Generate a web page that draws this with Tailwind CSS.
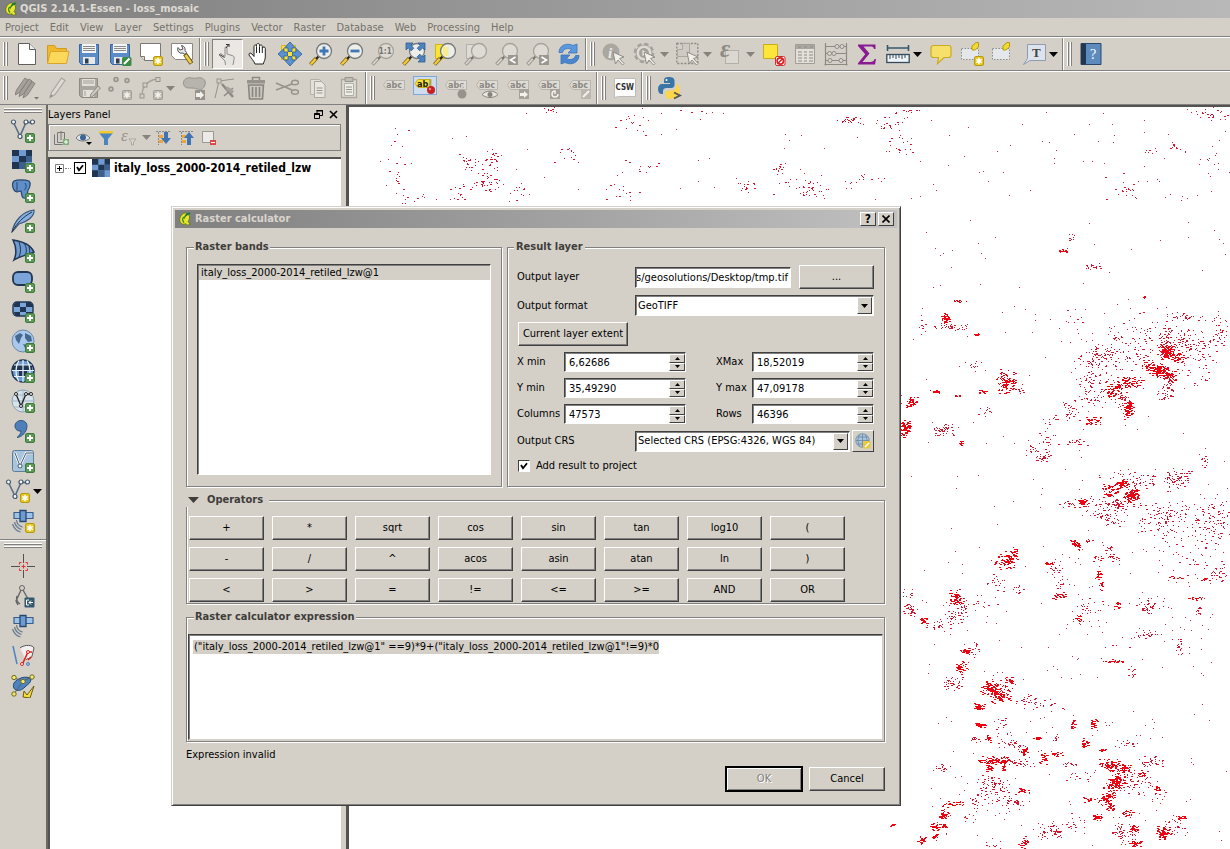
<!DOCTYPE html>
<html lang="en">
<head>
<meta charset="utf-8">
<title>QGIS 2.14.1-Essen - loss_mosaic</title>
<script src="https://cdn.jsdelivr.net/npm/@tailwindcss/browser@4"></script>
</head>
<body class="flex h-screen flex-col overflow-hidden bg-[#d4d0c8] font-['DejaVu_Sans_Condensed','DejaVu_Sans',sans-serif] text-[11px] leading-[14px] text-black">

<!-- Icon library -->
<svg class="hidden" aria-hidden="true">
  <defs>
    <symbol id="plus" viewBox="0 0 24 24"><rect x="14.500" y="14.500" width="9" height="9" rx="1.500" fill="#5b9a55" stroke="#3f7a3c"/><path d="M19 16v6M16 19h6" stroke="#fff" stroke-width="2"/></symbol>
    <symbol id="star" viewBox="0 0 24 24"><rect x="14.500" y="14.500" width="9" height="9" rx="1.500" fill="#e8c51c" stroke="#b59a12"/><path d="M19 15.800v6.400M16.200 17.400l5.600 3.200M21.800 17.400l-5.600 3.200" stroke="#fff" stroke-width="1.600"/></symbol>
    <symbol id="gstar" viewBox="0 0 24 24"><rect x="14.500" y="14.500" width="9" height="9" rx="1" fill="#bab7b0" stroke="#a19e97"/><path d="M19 15.800v6.400M16.200 17.400l5.600 3.200M21.800 17.400l-5.600 3.200" stroke="#f3f1ec" stroke-width="1.600"/></symbol>
    <symbol id="down" viewBox="0 0 9 5"><path d="M0 0h9L4.500 5z" fill="currentColor"/></symbol>
    <symbol id="tick" viewBox="0 0 8 8"><path d="M1 3l2 3.200 4-5" fill="none" stroke="#000" stroke-width="1.800"/></symbol>
    <symbol id="logo" viewBox="0 0 16 16"><path d="M9 1C5 1 2 5 2 9c0 3 2 5 4.500 5 .8 0 1.600-.3 2.300-.7L11 15l3-1-2.500-3C13 9 13.500 6 13 4z" fill="#e9e62f" stroke="#4e6b12" stroke-width=".8"/><path d="M13.500.5C9 1 6.500 4 7 8.500 8.500 4.500 11 3.500 14 2z" fill="#197a27"/><path d="M6.500 5.500C5 7.500 5 10.500 7 12" stroke="#2f7a1c" stroke-width="1.600" fill="none"/></symbol>

    <symbol id="new" viewBox="0 0 24 24"><path d="M3.500 1.500h11l6 6v15h-17z" fill="#fff" stroke="#5f5f5f"/><path d="M14.500 1.500v6h6" fill="#eee" stroke="#5f5f5f"/></symbol>
    <symbol id="open" viewBox="0 0 24 24"><path d="M1.500 20.500v-17h7l2 3h10v4" fill="#f0b92c" stroke="#d39a1f"/><path d="M1.500 21.500l3-12h18.500l-2.500 12z" fill="#fbd75b" stroke="#dba52c"/></symbol>
    <symbol id="save" viewBox="0 0 24 24"><path d="M2.500 2.500h19v20h-17l-2-2z" fill="#5b8cc8" stroke="#34659f"/><path d="M5 2h14v9H5z" fill="#f4f4f4"/><path d="M6 4.500h12M6 6.500h12M6 8.500h12" stroke="#8a8a8a"/><path d="M6 15h12v7H6z" fill="#e8e8e8"/><path d="M8 16.500h3.500v5H8z" fill="#2d3e54"/></symbol>
    <symbol id="saveas" viewBox="0 0 24 24"><use href="#save"/><rect x="14" y="15" width="9.500" height="9" rx="1.500" fill="#3d8a46"/><path d="M16 22l5.500-5.500" stroke="#fff" stroke-width="2"/></symbol>
    <symbol id="composer" viewBox="0 0 24 24"><path d="M1.500 1.500h20v17h-16l-4-4z" fill="#fff" stroke="#777"/><path d="M1.500 14.500h4v4" fill="#ddd" stroke="#777"/><use href="#star"/></symbol>
    <symbol id="manager" viewBox="0 0 24 24"><path d="M1.500 1.500h21v16h-17l-4-4z" fill="#fff" stroke="#888"/><path d="M15 12l6.500 9.500" stroke="#6b5a18" stroke-width="4.500" fill="none"/><path d="M15.500 13l5.500 8" stroke="#efd04a" stroke-width="2.500" fill="none"/><path d="M8 5.500a4 4 0 005 5.500l2 1.500 1.500-2-1.500-2a4 4 0 00-3.500-5L13 7l-3 1z" fill="#e5e7ec" stroke="#555"/></symbol>
    <symbol id="touch" viewBox="0 0 24 24"><path d="M9.500 23l-.5-4-6-6 1.500-1.500 4.500 3V6c0-1.500 2-1.500 2 0v6l5 1.500c2 .5 2.500 1.500 2 4l-1 5.500" fill="#e7e5e0" stroke="#8d8d8d"/><path d="M10 6l3-4M3.500 12.500l5 3" stroke="#333"/><path d="M13 2.500h-3M13 2v3" stroke="#333"/></symbol>
    <symbol id="hand" viewBox="0 0 24 24"><path d="M8 22c-1-3-4-6-6-9-.5-2 1.500-2.500 3-1l2 2.500V4.500c0-2 2.500-2 2.500 0V3c0-2 3-2 3 0v1.500c0-2 2.800-2 2.800 0V6c.5-1.500 3-1.500 3 .5V15c0 3-1.500 4.500-2 7z" fill="#fff" stroke="#222"/><path d="M9.500 5v6M12.500 5v6M15.300 6v5" stroke="#222"/></symbol>
    <symbol id="pan" viewBox="0 0 24 24"><path d="M3.500 3.500h14v14h-14z" fill="#f9e33a" stroke="#d2b71e"/><path d="M12 0l5.500 6H14v3.500h-4V6H6.500zM12 24l-5.500-6H10v-3.500h4V18h3.500zM0 12l6-5.500V10h3.500v4H6v3.500zM24 12l-6 5.500V14h-3.500v-4H18V6.500z" fill="#5c93cf" stroke="#2d5c93" stroke-width=".8"/></symbol>
    <symbol id="glass" viewBox="0 0 24 24"><path d="M1.500 22.500l6-6.500" stroke="#806414" stroke-width="4"/><path d="M1.800 22.200l5.700-6.200" stroke="#f2cc3c" stroke-width="2.400"/><path d="M7 17l2.500-2.500" stroke="#222" stroke-width="2.200"/><circle cx="15" cy="9" r="7.500" fill="#f1f3ef" fill-opacity=".85" stroke="#757a7c" stroke-width="1.300"/></symbol>
    <symbol id="gglass" viewBox="0 0 24 24"><path d="M1.500 22.500l6-6.500" stroke="#9a968e" stroke-width="3.600"/><path d="M2 22l5.500-6" stroke="#d9d6d0" stroke-width="1.800"/><path d="M7 17l2.500-2.500" stroke="#77746e" stroke-width="2"/><circle cx="15" cy="9" r="7.500" fill="#dedbd5" stroke="#a6a39c" stroke-width="1.300"/></symbol>
    <symbol id="zin" viewBox="0 0 24 24"><use href="#glass"/><path d="M15 4.500v9M10.500 9h9" stroke="#3d77b5" stroke-width="2.800"/></symbol>
    <symbol id="zout" viewBox="0 0 24 24"><use href="#glass"/><path d="M10.500 9h9" stroke="#3d77b5" stroke-width="2.800"/></symbol>
    <symbol id="zone" viewBox="0 0 24 24"><use href="#gglass"/><text x="7.800" y="12" font-size="8" font-weight="bold" fill="#77746e">1:1</text></symbol>
    <symbol id="zfull" viewBox="0 0 24 24"><use href="#glass"/><path d="M4 1h7L8.800 3.200l3 3-2.600 2.600-3-3L4 8zM23 1v7l-2.200-2.200-3 3-2.600-2.600 3-3L16 1zM23 20h-7l2.200-2.200-3-3 2.600-2.600 3 3L23 13z" fill="#4d84c0" stroke="#2c5c92" stroke-width=".8"/></symbol>
    <symbol id="zsel" viewBox="0 0 24 24"><path d="M2.500 2.500h13v14h-13z" fill="#fbe430" stroke="#cdb41c"/><use href="#glass"/><path d="M10 5h5v9h-5z" fill="#f7ec92"/></symbol>
    <symbol id="zlay" viewBox="0 0 24 24"><path d="M2.500 2.500h13v14h-13z" fill="#dedbd5" stroke="#b3b0a9"/><use href="#gglass"/></symbol>
    <symbol id="zprev" viewBox="0 0 24 24"><use href="#gglass"/><path d="M13 13h10v10H13z" fill="#9b9892"/><path d="M20.500 15l-5 3 5 3" stroke="#fff" stroke-width="1.600" fill="none"/></symbol>
    <symbol id="znext" viewBox="0 0 24 24"><use href="#gglass"/><path d="M13 13h10v10H13z" fill="#9b9892"/><path d="M15.500 15l5 3-5 3" stroke="#fff" stroke-width="1.600" fill="none"/></symbol>
    <symbol id="refresh" viewBox="0 0 24 24"><path d="M2 10.500C2 4 9 0 16 3.500L20 2v9h-9l3.500-3.500C11 5.500 6.500 6.500 5.500 10.500z" fill="#5c98dd" stroke="#3a74b8" stroke-width=".8"/><path d="M22 13.500C22 20 15 24 8 20.500L4 22v-9h9l-3.500 3.500c3.500 2 8 1 9-3z" fill="#4a86cf" stroke="#3a74b8" stroke-width=".8"/></symbol>
    <symbol id="cur" viewBox="0 0 24 24"><path d="M11 10l11 5-4.500 1.500 4.500 5-1.500 1.500-4.500-5-2.500 4z" fill="#f1efea" stroke="#8f8c86"/></symbol>
    <symbol id="info" viewBox="0 0 24 24"><circle cx="9" cy="10" r="8.500" fill="#aaa7a0"/><text x="6" y="15.500" font-size="15" font-weight="bold" font-style="italic" fill="#ebe9e4" font-family="Liberation Serif">i</text><use href="#cur"/></symbol>
    <symbol id="gear" viewBox="0 0 24 24"><circle cx="11" cy="11" r="8.800" fill="#d9d6d0" stroke="#a5a29b" stroke-width="3" stroke-dasharray="4.200 2.700"/><circle cx="11" cy="11" r="8" fill="#dedbd5" stroke="#a5a29b"/><circle cx="11" cy="11" r="5" fill="#a5a29b"/><path d="M9.500 8l4.500 3-4.500 3z" fill="#f1efea"/><use href="#cur"/></symbol>
    <symbol id="select" viewBox="0 0 24 24"><path d="M.8 1.500h21v20h-21z" fill="none" stroke="#8b8882" stroke-width="1.300" stroke-dasharray="2 1.500"/><path d="M6.500 1.500h7v13h-12v-7h5z" fill="#cecbc4" stroke="#aaa7a0"/><use href="#cur"/></symbol>
    <symbol id="eps" viewBox="0 0 24 24"><rect x="6.500" y="8.500" width="13" height="13" fill="#dbd8d1" stroke="#b3b0a9"/><text x="1" y="15" font-size="25" font-style="italic" font-weight="bold" fill="#8d8a84" font-family="Liberation Serif">ε</text></symbol>
    <symbol id="desel" viewBox="0 0 24 24"><path d="M1.500 2.500h14v14h-14z" fill="#fde53a" stroke="#c9ad1a"/><rect x="13.500" y="14.500" width="9.500" height="9" rx="1.500" fill="#fff" stroke="#c83232"/><circle cx="18.300" cy="19" r="3.200" fill="#fff" stroke="#d22" stroke-width="1.700"/><path d="M16 21.300l4.600-4.600" stroke="#d22" stroke-width="1.500"/></symbol>
    <symbol id="table" viewBox="0 0 24 24"><path d="M2.500 2.500h19v19h-19z" fill="#e3e0da" stroke="#a09d96"/><path d="M3 3h18v4H3z" fill="#aaa7a0"/><path d="M5 10h4M11 10h3M16 10h4M5 13h4M11 13h3M16 13h4M5 16h4M11 16h3M16 16h4M5 19h4M11 19h3M16 19h4M5 5h3M11 5h3M17 5h3" stroke="#8f8c86"/></symbol>
    <symbol id="abacus" viewBox="0 0 24 24"><path d="M1.500 1v22.500M22.500 1v22.500M1.500 4.500h21M1.500 11.500h21M1.500 18.500h21M.5 22.500h23" stroke="#8d8a84" fill="none" stroke-width="1.200"/><g fill="#dad7d0" stroke="#8d8a84"><circle cx="13" cy="4.500" r="2"/><circle cx="18" cy="4.500" r="2"/><circle cx="5.500" cy="11.500" r="2"/><circle cx="10" cy="11.500" r="2"/><circle cx="6" cy="18.500" r="2"/><circle cx="17" cy="18.500" r="2"/></g></symbol>
    <symbol id="sigma" viewBox="0 0 24 24"><path d="M3 2.500h17.500V7H19c-.5-2-1.500-2.500-3.500-2.500H8.500l6 7L7.500 20h8c2 0 3.500-.8 4-3H21l-1 5.500H3v-1.200l7.200-9L3 4z" fill="#8a1a92"/></symbol>
    <symbol id="ruler" viewBox="0 0 24 24"><path d="M1.500 3v6M22.500 3v6M2 6h20" stroke="#34596c" stroke-width="1.600"/><rect x=".8" y="12.500" width="22.400" height="8" fill="#eef3f5" stroke="#34495a" stroke-width="1.300"/><path d="M4 13v4M7 13v3M10 13v4M13 13v3M16 13v4M19 13v3" stroke="#34495a"/></symbol>
    <symbol id="tip" viewBox="0 0 24 24"><path d="M4.500 3.500h15c1.500 0 2.500 1 2.500 2.500v7c0 1.500-1 2.500-2.500 2.500H15l-6.500 6 1-6h-5C3 15.500 2 14.500 2 13V6c0-1.500 1-2.500 2.500-2.500z" fill="#f7e06a" stroke="#c9aa23" stroke-width="1.200"/></symbol>
    <symbol id="bkmk" viewBox="0 0 24 24"><rect x="1.500" y="6.500" width="17" height="11" fill="#e4e8ea" stroke="#8d8d8d" stroke-dasharray="1.500 1.500"/><path d="M12 4l4-3.500h2.500V5L15 8h-3z" fill="#f3d92f" stroke="#b59a12"/></symbol>
    <symbol id="newbk" viewBox="0 0 24 24"><use href="#bkmk"/><use href="#star"/></symbol>
    <symbol id="annot" viewBox="0 0 24 24"><path d="M5.500 2.500h18v16H8l-6.500 4 4-6z" fill="#dce3ec" stroke="#8e9cae"/><text x="10" y="15" font-size="13" font-weight="bold" fill="#444" font-family="Liberation Serif">T</text></symbol>
    <symbol id="help" viewBox="0 0 24 24"><path d="M2 1.500h20v21H2z" fill="#5d8bbd" stroke="#2c4868"/><path d="M2 1.500h5v21H2z" fill="#22384f"/><text x="11" y="17" font-size="14" fill="#fff" font-family="Liberation Serif">?</text></symbol>

    <symbol id="pencil" viewBox="0 0 24 24"><path d="M4 21.500l1.500-5L15.500 2l3.500 2.500L9 18.500z" fill="#dedbd5" stroke="#aaa7a0" stroke-width="1.200"/><path d="M4 21.500l1-3 2 1.500z" fill="#8d8a84"/></symbol>
    <symbol id="pencils" viewBox="0 0 24 24"><g fill="#a5a29b" stroke="#86837d"><path d="M0 19l1.500-5L10 2l3 2-8.500 12.500z"/><path d="M4 20.500l1.500-5L14 3l3 2-8.500 13z"/><path d="M8 22l1.500-5L17 5.500l3 2L12.500 19z"/></g><path d="M19 21h5l-2.500 2.500z" fill="#77746e"/></symbol>
    <symbol id="gsave" viewBox="0 0 24 24"><path d="M2.500 2.500h18v19h-16l-2-2z" fill="#aaa7a0" stroke="#8d8a84"/><path d="M5 3h13v7H5zM6 14h11v7H6z" fill="#e3e0da"/><path d="M6 5h11M6 7h11M8 15v5" stroke="#a09d96"/><path d="M13 22l1-4 7-8 2.500 2L16 20z" fill="#cdcac3" stroke="#8d8a84"/></symbol>
    <symbol id="nodes" viewBox="0 0 24 24"><g fill="#c5c2bb" stroke="#96938c" stroke-width="1.500"><circle cx="8" cy="3.500" r="2"/><circle cx="19" cy="4.500" r="2"/><circle cx="3" cy="13" r="2"/></g><use href="#gstar"/></symbol>
    <symbol id="curve" viewBox="0 0 24 24"><path d="M3 20C3 12 6 5 18 3" fill="none" stroke="#a5a29b" stroke-width="1.300"/><g fill="#d4d0c8" stroke="#96938c"><rect x="1" y="18" width="4" height="4"/><rect x="4" y="7" width="4" height="4"/><rect x="17" y="1.500" width="4" height="4"/></g><use href="#gstar"/></symbol>
    <symbol id="move" viewBox="0 0 24 24"><path d="M1.500 7c0-4 4-6 8-5s7-1 10 0 5 4 3 8-4 4-7 3-5-1-8-1-6-1-6-5z" fill="#b7b4ad" stroke="#96938c"/><path d="M13 14h10v10H13z" fill="#96938c"/><path d="M14 17h4v-2l4 4-4 4v-2h-4z" fill="#f3f1ec"/></symbol>
    <symbol id="nodetool" viewBox="0 0 24 24"><path d="M2 22L6 5l15-2" stroke="#96938c" fill="none"/><rect x="4" y="3" width="4" height="4" fill="#d4d0c8" stroke="#96938c"/><path d="M9 8l11 13" stroke="#8d8a84" stroke-width="2.500"/><path d="M20 12l-9 8" stroke="#8d8a84" stroke-width="1.500"/><path d="M14 10l7 5-2 3-6-4z" fill="#a5a29b"/></symbol>
    <symbol id="trash" viewBox="0 0 24 24"><path d="M8.500 4V1.500h7V4" fill="none" stroke="#8d8a84" stroke-width="1.500"/><path d="M3 4h18v3.500H3z" fill="#96938c"/><path d="M4.500 9h15l-1 14h-13z" fill="#c9c6bf" stroke="#86837d" stroke-width="1.500"/><path d="M8.500 11v10M12 11v10M15.500 11v10" stroke="#86837d" stroke-width="1.500"/></symbol>
    <symbol id="cut" viewBox="0 0 24 24"><path d="M1 7l16 7M1 14l16-6" stroke="#96938c" stroke-width="1.600"/><ellipse cx="20" cy="6.500" rx="3.500" ry="2.300" fill="none" stroke="#96938c" stroke-width="1.500"/><ellipse cx="20" cy="16" rx="3.500" ry="2.300" fill="none" stroke="#96938c" stroke-width="1.500"/></symbol>
    <symbol id="copy" viewBox="0 0 24 24"><path d="M4.500 3.500h9l2 2v13h-11z" fill="#e3e0da" stroke="#b3b0a9"/><path d="M8.500 5.500h7l3.500 3.500v12.500H8.500z" fill="#e9e7e2" stroke="#aaa7a0"/><path d="M10.500 12h6M10.500 14.500h6M10.500 17h6" stroke="#96938c"/></symbol>
    <symbol id="paste" viewBox="0 0 24 24"><path d="M4.500 3.500h15v18h-15z" fill="#dedbd5" stroke="#aaa7a0" stroke-width="1.300"/><path d="M8 1.500h8v4H8z" fill="#c0bdb6" stroke="#96938c"/><path d="M7.500 7.500h9v12h-9z" fill="#f0eee9" stroke="#b3b0a9"/><path d="M9 11h6M9 13.500h6M9 16h6" stroke="#96938c"/></symbol>
    <symbol id="abc" viewBox="0 0 24 24"><path d="M4.500 4.500h18v9h-18l-3-4.500z" fill="#dedbd5" stroke="#b7b4ad"/><text x="4" y="12" font-size="9" font-weight="bold" fill="#8b8882">abc</text></symbol>
    <symbol id="abcon" viewBox="0 0 24 24"><rect x=".5" y=".5" width="23" height="18" fill="#cfdced" stroke="#7ea8dc"/><path d="M5 3.500h13v8H5l-3-4z" fill="#fbe430" stroke="#c9ad1a"/><text x="4" y="11" font-size="9" font-weight="bold" fill="#222">ab</text><path d="M17 4v10" stroke="#999" stroke-width="1.500"/><circle cx="18" cy="14" r="4" fill="#c62020"/><circle cx="17" cy="13" r="1.200" fill="#ee8b8b"/></symbol>
    <symbol id="abcpin" viewBox="0 0 24 24"><use href="#abc"/><path d="M18 8v8" stroke="#d4d0c8" stroke-width="2"/><circle cx="18" cy="18" r="4.500" fill="#96938c"/></symbol>
    <symbol id="abceye" viewBox="0 0 24 24"><use href="#abc"/><path d="M7 18.500c4-4.500 12-4.500 16 0-4 4-12 4-16 0z" fill="#e9e7e2" stroke="#86837d"/><circle cx="15" cy="18.500" r="2.500" fill="#86837d"/></symbol>
    <symbol id="abcmove" viewBox="0 0 24 24"><use href="#abc"/><path d="M13 13h10v10H13z" fill="#a5a29b"/><path d="M14 17h4v-2l4 3.500-4 3.500v-2h-4z" fill="#f3f1ec"/></symbol>
    <symbol id="abcrot" viewBox="0 0 24 24"><use href="#abc"/><path d="M13 13h10v10H13z" fill="#a5a29b"/><path d="M21 18a3 3 0 11-3-3v3" stroke="#f3f1ec" stroke-width="1.500" fill="none"/></symbol>
    <symbol id="abced" viewBox="0 0 24 24"><use href="#abc"/><path d="M13 13h10v10H13z" fill="#bab7b0"/><path d="M15 21l6-6" stroke="#f3f1ec" stroke-width="2"/></symbol>
    <symbol id="csw" viewBox="0 0 24 24"><path d="M1.500 2.500h21v18h-17l-4 1z" fill="#fff" stroke="#bbb"/><text x="2.500" y="14" font-size="8" font-weight="bold" fill="#333">CSW</text></symbol>
    <symbol id="python" viewBox="0 0 24 24"><path d="M11 1c-4 0-5 1.500-5 3.500V7h6v1H4c-2.500 0-4 2-4 5s1.500 5 3.500 5H5v-3c0-2 1.500-3 3.500-3h5c1.500 0 3-1 3-3V4.500C16.500 2 14 1 11 1z" fill="#3a75a8"/><circle cx="8.500" cy="4" r="1" fill="#fff"/><path d="M18 8v3c0 2-1.500 3.500-3.500 3.500h-4c-2 0-3 1.200-3 3V20c0 2 2 3 5 3s5-1 6-3l3-2c1-5-.5-10-3.500-10z" fill="#fbd64a"/><path d="M16 16.500l6 3-6 3" stroke="#555" stroke-width="1.800" fill="none"/></symbol>

    <symbol id="vect" viewBox="0 0 24 24"><path d="M2.500 3.500L9 17l6-13.500h6" stroke="#5a6f86" stroke-width="1.600" fill="none"/><g fill="#fff" stroke="#41566d" stroke-width="1.200"><circle cx="2.500" cy="3" r="2"/><circle cx="9" cy="17.500" r="2"/><circle cx="15" cy="3" r="2"/><circle cx="21.500" cy="3" r="2"/></g></symbol>
    <symbol id="rast" viewBox="0 0 24 24"><path d="M1 1h20v19H1z" fill="#6f9bd1"/><path d="M1 1h7v6H1zM15 1h6v6h-6zM8 7h7v6H8zM1 13h7v7H1z" fill="#1f3552"/><path d="M8 13h7v7H8zM15 7h6v6h-6z" fill="#3d5f8c"/></symbol>
    <symbol id="pg" viewBox="0 0 24 24"><path d="M3 2c3-1.500 11-1.500 15 0 2 2 1 7-1 9l-1 6c-1 3-4 3-5 0l-1-5-4 1C2 12 0 5 3 2z" fill="#5f8fc8" stroke="#26476f" stroke-width="1.200"/><path d="M6 3v9M14 4c2 3 1 6-1 7" stroke="#26476f" fill="none"/></symbol>
    <symbol id="feather" viewBox="0 0 24 24"><path d="M1 23C3 12 12 2 23 1c1 6-7 12-15 14z" fill="#85b0e2" stroke="#3a5170" stroke-width="1.100"/><path d="M1 23C6 14 12 8 21 3" stroke="#22344c" fill="none"/></symbol>
    <symbol id="sail" viewBox="0 0 24 24"><path d="M2 1c7 1 17 3 21 12-6 3-14 4-20 8 3-7 2-14-1-20z" fill="#6f9bd1" stroke="#1f3552" stroke-width="1.500"/><path d="M8 3c2 6 2 10 0 15M13 4c3 5 3 9 1 12M18 8c1 3 1 5 0 7" stroke="#1f3552" fill="none"/></symbol>
    <symbol id="mss" viewBox="0 0 24 24"><rect x="2" y="3" width="19" height="13" rx="5" fill="#7ba5d8" stroke="#1f3552" stroke-width="1.800"/></symbol>
    <symbol id="orast" viewBox="0 0 24 24"><rect x="2" y="3" width="20" height="14" rx="4" fill="#7ba5d8" stroke="#1f3552" stroke-width="1.400"/><path d="M3 5l3-2h3v5H3zM15 3h4l3 3v2h-7zM9 8h6v5H9zM3 13h6v4H4zM15 13h7l-2 4h-5z" fill="#1f3552"/></symbol>
    <symbol id="globe1" viewBox="0 0 24 24"><circle cx="12" cy="12" r="11" fill="#a9c8ec" stroke="#6c87a8"/><path d="M4 7l5-3 3 2-2 3-2 6-3-4zM14 4l6 3 1 5-4 1-3-4zM12 15l4 1-1 5z" fill="#46688f"/></symbol>
    <symbol id="globe2" viewBox="0 0 24 24"><circle cx="12" cy="12" r="11" fill="#6f9bd1" stroke="#1f3552" stroke-width="1.500"/><path d="M3 6h18v5H1zM8 12h8v5H8z" fill="#1f3552"/><path d="M1 11.500h22M3 6h18M3 17.500h18M12 1v22M8 1.500c-4 6-4 15 0 21M16 1.500c4 6 4 15 0 21" stroke="#e9f1fb" fill="none" stroke-width="1.200"/></symbol>
    <symbol id="globe3" viewBox="0 0 24 24"><circle cx="12" cy="12" r="11" fill="#d7e2ea" stroke="#8aa0b2"/><path d="M1 12h22M12 1v22M3 6h18M3 18h18" stroke="#9fb4c4" fill="none"/><path d="M5 5l5 12 5-12h5" stroke="#222" stroke-width="1.300" fill="none"/><g fill="#fff" stroke="#222"><circle cx="5" cy="5" r="1.500"/><circle cx="10" cy="17" r="1.500"/><circle cx="15" cy="5" r="1.500"/><circle cx="20" cy="5" r="1.500"/></g></symbol>
    <symbol id="comma" viewBox="0 0 24 24"><path d="M10 1.500c5 0 7 4 5.500 8.500C14 15 10 18 6 18.500c3-2.500 4-4.500 4-6.500-3 .5-6-1.500-6-5 0-3 2.500-5.500 6-5.500z" fill="#4f7fb8" stroke="#2f5480"/></symbol>
    <symbol id="virt" viewBox="0 0 24 24"><rect x="1.500" y="1.500" width="21" height="21" rx="2" fill="#a9c4de" stroke="#5f7c98"/><path d="M4 4l5 13 6-13h7" stroke="#fff" stroke-width="2.500" fill="none"/><path d="M4 4l5 13 6-13h7" stroke="#41566d" fill="none"/><circle cx="9" cy="17" r="2" fill="#fff" stroke="#41566d"/></symbol>
    <symbol id="sat" viewBox="0 0 24 24"><path d="M3 3.500h19v6H3z" fill="#9dc1e8" stroke="#38608c" stroke-width="1.200"/><path d="M9 1.500h6v11H9z" fill="#6f9bd1" stroke="#26476f" stroke-width="1.300"/><path d="M5.500 11a8 8 0 006 7M3.500 13a10 10 0 007 7.500M1.500 15a12 12 0 008 8" stroke="#6d7f92" fill="none" stroke-width="1.300"/></symbol>
    <symbol id="cross" viewBox="0 0 24 24"><path d="M0 12.500h9M16 12.500h8M12.500 0v9M12.500 16v8" stroke="#55504a" fill="none"/><path d="M8.500 10.500v-2h2M14.500 8.500h2v2M8.500 14.500v2h2M14.500 16.500h2v-2" stroke="#e03030" fill="none"/><path d="M12.500 10.500v4M10.500 12.500h4" stroke="#e03030"/></symbol>
    <symbol id="compass" viewBox="0 0 24 24"><circle cx="11" cy="4" r="2.500" fill="none" stroke="#666"/><path d="M10 6L5 17l2 4M12 6l5 9M6 12c-1 3 0 6 3 8" stroke="#666" fill="none" stroke-width="1.400"/><rect x="13.500" y="13.500" width="10" height="10" rx="1" fill="#34596c"/><path d="M18 16h-2.500v5H18M22 18.500h-4M20 16.500l-2 2 2 2" stroke="#fff" fill="none"/></symbol>
    <symbol id="topo" viewBox="0 0 24 24"><path d="M9 4c5-4 13-3 14 0l-2 8c-1 4-4 1-6 4" fill="#f3efee" stroke="#555"/><path d="M2 2l4 18" stroke="#4d84c0" stroke-width="1.500"/><path d="M11 21l6-13M16 8h5M17 16l3-3" stroke="#e02020" stroke-width="1.600"/><g fill="#fff" stroke="#e02020"><circle cx="17" cy="8" r="1.500"/><circle cx="11" cy="20" r="1.500"/></g><circle cx="17" cy="20" r="1.500" fill="#9dc1e8" stroke="#4d84c0"/></symbol>
    <symbol id="poly" viewBox="0 0 24 24"><path d="M3 9C6 4 16 1 20 5c0 4-3 5-6 8s-6 4-9 3-3-5-2-7z" fill="#4d84c0" stroke="#26476f"/><path d="M3 4l9 3 9-4M12 7L3 20" stroke="#56606b" fill="none"/><g fill="#f5e76a" stroke="#6b6a2a"><circle cx="3" cy="3.500" r="2.200"/><circle cx="21" cy="3" r="2.200"/><circle cx="12" cy="7.500" r="2.200"/><circle cx="3" cy="20" r="2.200"/></g><path d="M13 17l3 4 7-9-4 12-7-1z" fill="#f7df3a" stroke="#6b5b12"/></symbol>
  </defs>
</svg>

<header class="flex h-[18px] shrink-0 items-center gap-[2px] bg-linear-to-r from-[#808080] to-[#b8b8b8] pl-1">
  <svg class="size-[14px]"><use href="#logo"/></svg>
  <h1 class="font-bold text-[#dedad2]">QGIS 2.14.1-Essen - loss_mosaic</h1>
</header>

<nav class="flex h-[19px] shrink-0 items-center gap-[11px] border-b border-[#808080] pt-[2px] pl-[5px] text-[#75716b]" aria-label="Menu bar">
  <a href="#">Project</a><a href="#">Edit</a><a href="#">View</a><a href="#">Layer</a><a href="#">Settings</a><a href="#">Plugins</a><a href="#">Vector</a><a href="#">Raster</a><a href="#">Database</a><a href="#">Web</a><a href="#">Processing</a><a href="#">Help</a>
</nav>

<!-- Upper toolbar -->
<div class="flex h-[34px] shrink-0 border-y border-t-white border-b-[#808080] text-[#86837d] [&_button]:flex [&_button]:w-[31px] [&_button]:items-center [&_button]:justify-center [&_button_svg]:size-6" role="toolbar" aria-label="Project, navigation and attributes">
  <div class="flex w-[200px] shrink-0 border-r border-[#808080] pl-[3px]">
    <i class="my-1 mr-[2px] flex w-[6px] gap-px"><b class="w-[2px] border-l border-white bg-[#808080]"></b><b class="w-[2px] border-l border-white bg-[#808080]"></b></i>
    <button aria-label="New"><svg><use href="#new"/></svg></button>
    <button aria-label="Open"><svg><use href="#open"/></svg></button>
    <button aria-label="Save"><svg><use href="#save"/></svg></button>
    <button aria-label="Save as"><svg><use href="#saveas"/></svg></button>
    <button aria-label="New composer"><svg><use href="#composer"/></svg></button>
    <button aria-label="Composer manager"><svg><use href="#manager"/></svg></button>
  </div>
  <div class="flex shrink-0 border-r border-l border-l-white border-r-[#808080] pr-px pl-[3px]">
    <i class="my-1 mr-[2px] flex w-[6px] gap-px"><b class="w-[2px] border-l border-white bg-[#808080]"></b><b class="w-[2px] border-l border-white bg-[#808080]"></b></i>
    <button aria-label="Touch zoom and pan" class="my-px border border-t-[#808080] border-l-[#808080] border-r-white border-b-white bg-[#ebe8e3]"><svg><use href="#touch"/></svg></button>
    <button aria-label="Pan map"><svg><use href="#hand"/></svg></button>
    <button aria-label="Pan to selection"><svg><use href="#pan"/></svg></button>
    <button aria-label="Zoom in"><svg><use href="#zin"/></svg></button>
    <button aria-label="Zoom out"><svg><use href="#zout"/></svg></button>
    <button aria-label="Native resolution"><svg><use href="#zone"/></svg></button>
    <button aria-label="Zoom full"><svg><use href="#zfull"/></svg></button>
    <button aria-label="Zoom to selection"><svg><use href="#zsel"/></svg></button>
    <button aria-label="Zoom to layer"><svg><use href="#zlay"/></svg></button>
    <button aria-label="Zoom last"><svg><use href="#zprev"/></svg></button>
    <button aria-label="Zoom next"><svg><use href="#znext"/></svg></button>
    <button aria-label="Refresh"><svg><use href="#refresh"/></svg></button>
  </div>
  <div class="flex shrink-0 border-r border-l border-l-white border-r-[#808080] pr-px pl-[3px]">
    <i class="my-1 mr-[2px] flex w-[6px] gap-px"><b class="w-[2px] border-l border-white bg-[#808080]"></b><b class="w-[2px] border-l border-white bg-[#808080]"></b></i>
    <button aria-label="Identify"><svg><use href="#info"/></svg></button>
    <button aria-label="Run feature action"><svg><use href="#gear"/></svg></button><span class="flex w-3 items-center"><svg class="h-[5px] w-[9px]"><use href="#down"/></svg></span>
    <button aria-label="Select features"><svg><use href="#select"/></svg></button><span class="flex w-3 items-center"><svg class="h-[5px] w-[9px]"><use href="#down"/></svg></span>
    <button aria-label="Select by expression"><svg><use href="#eps"/></svg></button><span class="flex w-3 items-center"><svg class="h-[5px] w-[9px]"><use href="#down"/></svg></span>
    <button aria-label="Deselect"><svg><use href="#desel"/></svg></button>
    <button aria-label="Attribute table"><svg><use href="#table"/></svg></button>
    <button aria-label="Field calculator"><svg><use href="#abacus"/></svg></button>
    <button aria-label="Statistics"><svg><use href="#sigma"/></svg></button>
    <button aria-label="Measure"><svg><use href="#ruler"/></svg></button><span class="flex w-3 items-center text-black"><svg class="h-[5px] w-[9px]"><use href="#down"/></svg></span>
    <button aria-label="Map tips"><svg><use href="#tip"/></svg></button>
    <button aria-label="New bookmark"><svg><use href="#newbk"/></svg></button>
    <button aria-label="Show bookmarks"><svg><use href="#bkmk"/></svg></button>
    <button aria-label="Text annotation"><svg><use href="#annot"/></svg></button><span class="flex w-3 items-center text-black"><svg class="h-[5px] w-[9px]"><use href="#down"/></svg></span>
  </div>
  <div class="flex shrink-0 border-l border-white pl-[3px]">
    <i class="my-1 mr-[2px] flex w-[6px] gap-px"><b class="w-[2px] border-l border-white bg-[#808080]"></b><b class="w-[2px] border-l border-white bg-[#808080]"></b></i>
    <button aria-label="Help"><svg><use href="#help"/></svg></button>
  </div>
</div>

<!-- Lower toolbar -->
<div class="flex h-[34px] shrink-0 border-y border-t-white border-b-[#808080] text-[#86837d] [&_button]:flex [&_button]:w-[31px] [&_button]:items-center [&_button]:justify-center [&_button_svg]:size-6" role="toolbar" aria-label="Digitizing and labels">
  <div class="flex shrink-0 border-r border-[#808080] pr-px pl-[3px]">
    <i class="my-1 mr-[2px] flex w-[6px] gap-px"><b class="w-[2px] border-l border-white bg-[#808080]"></b><b class="w-[2px] border-l border-white bg-[#808080]"></b></i>
    <button aria-label="Current edits"><svg><use href="#pencils"/></svg></button>
    <button aria-label="Toggle editing"><svg><use href="#pencil"/></svg></button>
    <button aria-label="Save edits"><svg><use href="#gsave"/></svg></button>
    <button aria-label="Add feature"><svg><use href="#nodes"/></svg></button>
    <button aria-label="Add circular string"><svg><use href="#curve"/></svg></button><span class="flex w-3 items-center"><svg class="h-[5px] w-[9px]"><use href="#down"/></svg></span>
    <button aria-label="Move feature"><svg><use href="#move"/></svg></button>
    <button aria-label="Node tool"><svg><use href="#nodetool"/></svg></button>
    <button aria-label="Delete selected"><svg><use href="#trash"/></svg></button>
    <button aria-label="Cut"><svg><use href="#cut"/></svg></button>
    <button aria-label="Copy"><svg><use href="#copy"/></svg></button>
    <button aria-label="Paste"><svg><use href="#paste"/></svg></button>
  </div>
  <div class="flex shrink-0 border-r border-l border-l-white border-r-[#808080] pr-px pl-[3px]">
    <i class="my-1 mr-[2px] flex w-[6px] gap-px"><b class="w-[2px] border-l border-white bg-[#808080]"></b><b class="w-[2px] border-l border-white bg-[#808080]"></b></i>
    <button aria-label="Layer labeling"><svg><use href="#abc"/></svg></button>
    <button aria-label="Highlight pinned labels"><svg><use href="#abcon"/></svg></button>
    <button aria-label="Pin labels"><svg><use href="#abcpin"/></svg></button>
    <button aria-label="Show labels"><svg><use href="#abceye"/></svg></button>
    <button aria-label="Move label"><svg><use href="#abcmove"/></svg></button>
    <button aria-label="Rotate label"><svg><use href="#abcrot"/></svg></button>
    <button aria-label="Change label"><svg><use href="#abced"/></svg></button>
  </div>
  <div class="flex shrink-0 border-r border-l border-l-white border-r-[#808080] pr-px pl-[3px]">
    <i class="my-1 mr-[2px] flex w-[6px] gap-px"><b class="w-[2px] border-l border-white bg-[#808080]"></b><b class="w-[2px] border-l border-white bg-[#808080]"></b></i>
    <button aria-label="MetaSearch"><svg><use href="#csw"/></svg></button>
  </div>
  <div class="flex shrink-0 border-l border-white pl-[3px]">
    <i class="my-1 mr-[2px] flex w-[6px] gap-px"><b class="w-[2px] border-l border-white bg-[#808080]"></b><b class="w-[2px] border-l border-white bg-[#808080]"></b></i>
    <button aria-label="Python console"><svg><use href="#python"/></svg></button>
  </div>
</div>

<main class="flex min-h-0 flex-1">
  <!-- Layer toolbar -->
  <div class="flex w-[48px] shrink-0 flex-col border-r-2 border-[#6b6964] [&_button]:relative [&_button]:flex [&_button]:h-[30px] [&_button]:w-full [&_button]:shrink-0 [&_button]:items-center [&_button]:justify-center [&_button_svg]:size-6" role="toolbar" aria-label="Manage layers">
    <i class="mx-1 mt-[3px] mb-[2px] flex h-[6px] shrink-0 flex-col gap-px"><b class="h-[2px] border-t border-white bg-[#808080]"></b><b class="h-[2px] border-t border-white bg-[#808080]"></b></i>
    <button aria-label="Add vector layer"><svg><use href="#vect"/><use href="#plus"/></svg></button>
    <button aria-label="Add raster layer"><svg><use href="#rast"/><use href="#plus"/></svg></button>
    <button aria-label="Add PostGIS layer"><svg><use href="#pg"/><use href="#plus"/></svg></button>
    <button aria-label="Add SpatiaLite layer"><svg><use href="#feather"/><use href="#plus"/></svg></button>
    <button aria-label="Add MSSQL layer"><svg><use href="#sail"/><use href="#plus"/></svg></button>
    <button aria-label="Add Oracle layer"><svg><use href="#mss"/><use href="#plus"/></svg></button>
    <button aria-label="Add Oracle raster"><svg><use href="#orast"/><use href="#plus"/></svg></button>
    <button aria-label="Add WMS layer"><svg><use href="#globe1"/><use href="#plus"/></svg></button>
    <button aria-label="Add WCS layer"><svg><use href="#globe2"/><use href="#plus"/></svg></button>
    <button aria-label="Add WFS layer"><svg><use href="#globe3"/><use href="#plus"/></svg></button>
    <button aria-label="Add delimited text"><svg><use href="#comma"/><use href="#plus"/></svg></button>
    <button aria-label="Add virtual layer"><svg><use href="#virt"/><use href="#plus"/></svg></button>
    <div class="flex h-[30px] shrink-0 items-center pl-[5px]">
      <button aria-label="New layer" class="max-w-[25px]"><svg><use href="#vect"/><use href="#star"/></svg></button>
      <svg class="ml-[3px] h-[5px] w-[9px]"><use href="#down"/></svg>
    </div>
    <button aria-label="New GPX layer"><svg><use href="#sat"/><use href="#star"/></svg></button>
    <hr class="mt-[3px] h-[2px] shrink-0 border-t border-[#808080] bg-white">
    <i class="mx-1 mt-[2px] mb-[2px] flex h-[6px] shrink-0 flex-col gap-px"><b class="h-[2px] border-t border-white bg-[#808080]"></b><b class="h-[2px] border-t border-white bg-[#808080]"></b></i>
    <button aria-label="Coordinate capture"><svg><use href="#cross"/></svg></button>
    <button aria-label="Dxf to Shp"><svg><use href="#compass"/></svg></button>
    <button aria-label="GPS tools"><svg><use href="#sat"/></svg></button>
    <button aria-label="Topology checker"><svg><use href="#topo"/></svg></button>
    <button aria-label="Geometry tools"><svg><use href="#poly"/></svg></button>
  </div>

  <!-- Layers panel -->
  <section class="flex w-[293px] shrink-0 flex-col" aria-label="Layers Panel">
    <div class="flex h-[19px] shrink-0 items-center pr-[3px]">
      <h2 class="flex-1">Layers Panel</h2>
      <button aria-label="Float" class="mr-[6px]"><svg class="size-[9px]" viewBox="0 0 9 9"><path d="M3 1h5.500v4.500H6M3 0v3M2.500.5H9" fill="none" stroke="#000"/><path d="M.5 3.500h5v5h-5z" fill="none" stroke="#000"/><path d="M.5 4h5" stroke="#000" stroke-width="2"/></svg></button>
      <button aria-label="Close"><svg class="size-[9px]" viewBox="0 0 9 9"><path d="M1 1l7 7M8 1L1 8" stroke="#000" stroke-width="1.600"/></svg></button>
    </div>
    <div class="flex h-[27px] shrink-0 items-center gap-[5px] border border-[#808080] pl-1 shadow-[inset_1px_1px_0_#fff] [&_svg]:size-4" role="toolbar" aria-label="Layer tree">
      <button aria-label="Add group"><svg viewBox="0 0 16 16"><path d="M1.500 4.500v10h8M4.500 2.500h7v10h-7zM8 1v9" fill="none" stroke="#777"/><path d="M10 9h6v6h-6z" fill="#7fae79"/><path d="M13 10v4M11 12h4" stroke="#fff"/></svg></button>
      <button aria-label="Visibility" class="ml-[2px]"><svg viewBox="0 0 16 16"><path d="M0 8c3-5 10-5 14 0-4 4-11 4-14 0z" fill="#dfe5ea" stroke="#777"/><circle cx="7" cy="7.500" r="3" fill="#3c6698"/><path d="M10 12h6l-3 3z"/></svg></button>
      <button aria-label="Filter legend" class="ml-[1px]"><svg viewBox="0 0 16 16"><path d="M1 3h14l-5 6v6H6V9z" fill="#4d84c0"/><path d="M1 1h14v2.500H1z" fill="#f3c92f"/></svg></button>
      <button aria-label="Filter by expression" class="ml-[2px]"><svg viewBox="0 0 16 16"><text x="0" y="11" font-size="17" font-style="italic" fill="#96938c" font-family="Liberation Serif">ε</text><path d="M8 9h7l-2.500 3v3h-2v-3z" fill="#dedbd5" stroke="#aaa7a0"/></svg></button>
      <svg class="h-[5px]! w-[9px]! text-[#86837d]"><use href="#down"/></svg>
      <button aria-label="Expand all"><svg viewBox="0 0 16 16"><path d="M0 1.500h15M2.500 2v13" stroke="#888" stroke-dasharray="2 1"/><path d="M3 5h4v3H3zM3 10h4v3H3z" fill="#efa53a"/><path d="M8 2h4v6h3l-5 6-5-6h3z" fill="#3f74b3"/></svg></button>
      <button aria-label="Collapse all" class="ml-[2px]"><svg viewBox="0 0 16 16"><path d="M0 1.500h15M2.500 2v13" stroke="#888" stroke-dasharray="2 1"/><path d="M3 5h4v3H3zM3 10h4v3H3z" fill="#efa53a"/><path d="M8 15h4V8h3l-5-6-5 6h3z" fill="#3f74b3"/></svg></button>
      <button aria-label="Remove layer" class="ml-[1px]"><svg viewBox="0 0 16 16"><path d="M1.500 1.500h11v11h-11z" fill="#eceae6" stroke="#999"/><path d="M9 10h6v5H9z" fill="#d84848"/><path d="M10 12.500h4" stroke="#fff"/></svg></button>
    </div>
    <div class="mt-[6px] flex-1 border-t-2 border-l-2 border-[#55534f] bg-white">
      <div class="flex h-[18px] items-center pl-[5px]">
        <button aria-label="Expand layer"><svg class="size-[9px]" viewBox="0 0 9 9"><path d="M.5.5h8v8h-8z" fill="#fff" stroke="#808080"/><path d="M2 4.500h5M4.500 2v5" stroke="#000"/></svg></button>
        <i class="mr-[3px] ml-px w-[6px] border-t border-dotted border-[#808080]"></i>
        <span class="mr-[6px] grid size-[12px] *:col-start-1 *:row-start-1"><input id="lyr" type="checkbox" checked class="peer size-[12px] appearance-none border border-black bg-white"><svg class="pointer-events-none invisible m-[2px] size-2 peer-checked:visible"><use href="#tick"/></svg></span>
        <svg class="mr-[4px] size-[18px]" viewBox="1 1 20 19" preserveAspectRatio="none"><use href="#rast" width="24" height="24"/></svg>
        <label for="lyr" class="text-xs font-bold">italy_loss_2000-2014_retiled_lzw</label>
      </div>
    </div>
  </section>

  <!-- Map view -->
  <section class="relative ml-[5px] min-w-0 flex-1 overflow-hidden border-t-2 border-l-[3px] border-[#55534f] bg-white" aria-label="Map">
    <canvas id="map" width="1600" height="1200" class="block max-w-none"></canvas>
  </section>
</main>

<!-- Raster calculator window -->
<div role="dialog" aria-labelledby="dlg" class="absolute top-[206px] left-[171px] w-[730px] border border-t-[#d4d0c8] border-l-[#d4d0c8] border-r-[#404040] border-b-[#404040] bg-[#d4d0c8] p-[3px] shadow-[inset_1px_1px_0_#fff,inset_-1px_-1px_0_#808080]">
  <div class="flex h-[18px] items-center bg-linear-to-r from-[#808080] to-[#c0c0c0] px-[3px]">
    <svg class="mr-[3px] size-[14px]"><use href="#logo"/></svg>
    <h2 id="dlg" class="flex-1 font-bold text-[#d9d5cd]">Raster calculator</h2>
    <button aria-label="Help" class="mr-[2px] flex h-[14px] w-4 items-center justify-center border border-t-white border-l-white border-r-[#404040] border-b-[#404040] bg-[#d4d0c8] text-[12px] leading-[12px] font-bold">?</button>
    <button aria-label="Close" class="flex h-[14px] w-4 items-center justify-center border border-t-white border-l-white border-r-[#404040] border-b-[#404040] bg-[#d4d0c8]"><svg class="size-2" viewBox="0 0 8 8"><path d="M.5.5l7 7M7.500.5l-7 7" stroke="#000" stroke-width="1.600"/></svg></button>
  </div>
  <form class="flex flex-col gap-[6px] pt-3 pr-3 pb-[10px] pl-[11px]" onsubmit="return false">
    <div class="flex gap-[5px]">
      <fieldset class="flex w-[316px] flex-col border border-[#808080] px-[10px] pt-[10px] pb-[11px] shadow-[1px_1px_0_#fff,inset_1px_1px_0_#fff]">
        <legend class="-ml-[3px] bg-[#d4d0c8] px-px font-bold text-[#3f3d3a]">Raster bands</legend>
        <ul class="h-[211px] border border-t-[#404040] border-l-[#404040] border-r-white border-b-white bg-white pt-px pl-px shadow-[inset_1px_1px_0_#808080]">
          <li class="bg-[#d4d0c8] px-[2px]">italy_loss_2000-2014_retiled_lzw@1</li>
        </ul>
      </fieldset>
      <fieldset class="min-w-0 flex-1 border border-[#808080] pt-[11px] pr-[10px] pb-3 pl-[9px] shadow-[1px_1px_0_#fff,inset_1px_1px_0_#fff]">
        <legend class="-ml-[3px] bg-[#d4d0c8] px-[2px] font-bold text-[#3f3d3a]">Result layer</legend>
        <div class="flex flex-col gap-[6px]">
          <div class="flex h-6 items-center">
            <label for="out" class="w-[118px]">Output layer</label>
            <input id="out" type="text" value="rs/geosolutions/Desktop/tmp.tif" class="h-[21px] min-w-0 flex-1 border border-t-[#404040] border-l-[#404040] border-r-white border-b-white bg-white pl-px -indent-[5px] shadow-[inset_1px_1px_0_#808080]">
            <button type="button" class="ml-2 h-6 w-[75px] border border-t-white border-l-white border-r-[#404040] border-b-[#404040] shadow-[inset_-1px_-1px_0_#808080]">...</button>
          </div>
          <div class="flex h-[21px] items-center">
            <label for="fmt" class="w-[118px]">Output format</label>
            <div class="relative h-full flex-1">
              <select id="fmt" class="h-full w-full appearance-none border border-t-[#404040] border-l-[#404040] border-r-white border-b-white bg-white px-[2px] shadow-[inset_1px_1px_0_#808080]"><option>GeoTIFF</option></select>
              <span class="pointer-events-none absolute top-[2px] right-[2px] bottom-[2px] flex w-[15px] items-center justify-center border border-t-white border-l-white border-r-[#404040] border-b-[#404040] bg-[#d4d0c8]"><svg class="h-[4px] w-[7px]"><use href="#down"/></svg></span>
            </div>
          </div>
          <button type="button" class="ml-px h-6 w-[110px] border border-t-white border-l-white border-r-[#404040] border-b-[#404040] shadow-[inset_-1px_-1px_0_#808080]">Current layer extent</button>
          <div class="grid grid-cols-[47px_122px_30px_36px_122px] gap-y-[6px] *:h-5 [&_button]:flex [&_button]:flex-1 [&_button]:items-center [&_button]:justify-center [&_button]:border [&_button]:border-t-white [&_button]:border-r-[#404040] [&_button]:border-b-[#404040] [&_button]:border-l-white [&_button]:bg-[#d4d0c8] [&_input]:w-0 [&_input]:flex-1 [&_input]:px-1 [&_svg]:h-[3px] [&_svg]:w-[5px] [&>div]:flex [&>div]:border [&>div]:border-t-[#404040] [&>div]:border-r-white [&>div]:border-b-white [&>div]:border-l-[#404040] [&>div]:bg-white [&>div]:pt-px [&>div]:shadow-[inset_1px_1px_0_#808080] [&>label]:leading-5">
            <label for="xmin">X min</label>
            <div><input id="xmin" type="text" value="6,62686"><span class="flex w-4 flex-col"><button type="button" aria-label="Increase X min"><svg class="rotate-180"><use href="#down"/></svg></button><button type="button" aria-label="Decrease X min"><svg><use href="#down"/></svg></button></span></div>
            <label for="xmax" class="col-start-4">XMax</label>
            <div><input id="xmax" type="text" value="18,52019"><span class="flex w-4 flex-col"><button type="button" aria-label="Increase X max"><svg class="rotate-180"><use href="#down"/></svg></button><button type="button" aria-label="Decrease X max"><svg><use href="#down"/></svg></button></span></div>
            <label for="ymin">Y min</label>
            <div><input id="ymin" type="text" value="35,49290"><span class="flex w-4 flex-col"><button type="button" aria-label="Increase Y min"><svg class="rotate-180"><use href="#down"/></svg></button><button type="button" aria-label="Decrease Y min"><svg><use href="#down"/></svg></button></span></div>
            <label for="ymax" class="col-start-4">Y max</label>
            <div><input id="ymax" type="text" value="47,09178"><span class="flex w-4 flex-col"><button type="button" aria-label="Increase Y max"><svg class="rotate-180"><use href="#down"/></svg></button><button type="button" aria-label="Decrease Y max"><svg><use href="#down"/></svg></button></span></div>
            <label for="cols">Columns</label>
            <div><input id="cols" type="text" value="47573"><span class="flex w-4 flex-col"><button type="button" aria-label="Increase columns"><svg class="rotate-180"><use href="#down"/></svg></button><button type="button" aria-label="Decrease columns"><svg><use href="#down"/></svg></button></span></div>
            <label for="rows" class="col-start-4">Rows</label>
            <div><input id="rows" type="text" value="46396"><span class="flex w-4 flex-col"><button type="button" aria-label="Increase rows"><svg class="rotate-180"><use href="#down"/></svg></button><button type="button" aria-label="Decrease rows"><svg><use href="#down"/></svg></button></span></div>
          </div>
          <div class="flex h-[22px] items-center">
            <label for="crs" class="w-[118px]">Output CRS</label>
            <div class="relative h-[21px] flex-1">
              <select id="crs" class="h-full w-full appearance-none border border-t-[#404040] border-l-[#404040] border-r-white border-b-white bg-white px-[2px] shadow-[inset_1px_1px_0_#808080]"><option>Selected CRS (EPSG:4326, WGS 84)</option></select>
              <span class="pointer-events-none absolute top-[2px] right-[2px] bottom-[2px] flex w-[15px] items-center justify-center border border-t-white border-l-white border-r-[#404040] border-b-[#404040] bg-[#d4d0c8]"><svg class="h-[4px] w-[7px]"><use href="#down"/></svg></span>
            </div>
            <button type="button" aria-label="Select CRS" class="ml-[2px] flex size-[22px] items-center justify-center border border-t-white border-l-white border-r-[#404040] border-b-[#404040]"><svg class="size-4" viewBox="0 0 16 16"><circle cx="7.500" cy="7.500" r="6.800" fill="#a9c4de" stroke="#7f97ad"/><path d="M1 7.500h13M7.500 1v13M2.500 4h10M2.500 11h10M4.500 2c-2 4-2 7 0 11M10.500 2c2 4 2 7 0 11" stroke="#6c87a0" fill="none" stroke-width=".8"/><path d="M8 8h7.500v7.500H8z" fill="#e8c93e"/><path d="M10 14l4-4" stroke="#fff" stroke-width="1.500"/></svg></button>
          </div>
          <div class="flex h-4 items-center">
            <span class="mr-[6px] ml-px grid size-[12px] *:col-start-1 *:row-start-1"><input id="add" type="checkbox" checked class="peer size-[12px] appearance-none border border-t-[#404040] border-l-[#404040] border-r-white border-b-white bg-white"><svg class="pointer-events-none invisible m-[2px] size-2 peer-checked:visible"><use href="#tick"/></svg></span>
            <label for="add">Add result to project</label>
          </div>
        </div>
      </fieldset>
    </div>

    <fieldset class="border border-[#808080] pt-[9px] pb-px pl-[2px] shadow-[1px_1px_0_#fff,inset_1px_1px_0_#fff]">
      <legend class="-ml-[3px] bg-[#d4d0c8] pr-[6px] pl-[2px] font-bold text-[#3f3d3a]"><button type="button" class="flex items-center gap-2"><svg class="h-[6px] w-[11px]" viewBox="0 0 9 5" preserveAspectRatio="none"><path d="M0 0h9L4.500 5z" fill="#3f3d3a"/></svg>Operators</button></legend>
      <div class="grid grid-cols-[repeat(8,75px)] gap-x-2 gap-y-[7px] [&>button]:h-6 [&>button]:border [&>button]:border-t-white [&>button]:border-r-[#404040] [&>button]:border-b-[#404040] [&>button]:border-l-white [&>button]:shadow-[inset_-1px_-1px_0_#808080]">
        <button type="button">+</button><button type="button">*</button><button type="button">sqrt</button><button type="button">cos</button><button type="button">sin</button><button type="button">tan</button><button type="button">log10</button><button type="button">(</button>
        <button type="button">-</button><button type="button">/</button><button type="button">^</button><button type="button">acos</button><button type="button">asin</button><button type="button">atan</button><button type="button">ln</button><button type="button">)</button>
        <button type="button">&lt;</button><button type="button">&gt;</button><button type="button">=</button><button type="button">!=</button><button type="button">&lt;=</button><button type="button">&gt;=</button><button type="button">AND</button><button type="button">OR</button>
      </div>
    </fieldset>

    <fieldset class="border border-[#808080] px-px pt-[10px] pb-px shadow-[1px_1px_0_#fff,inset_1px_1px_0_#fff]">
      <legend class="ml-[6px] bg-[#d4d0c8] px-px font-bold text-[#3f3d3a]"><label for="expr">Raster calculator expression</label></legend>
      <textarea id="expr" spellcheck="false" class="block h-[106px] w-full resize-none border border-t-[#404040] border-l-[#404040] border-r-[#d4d0c8] border-b-[#d4d0c8] bg-white bg-[linear-gradient(#d4d0c8,#d4d0c8)] bg-[length:466px_14px] bg-[position:4px_5px] bg-no-repeat px-[5px] py-[5px] shadow-[inset_1px_1px_0_#808080]">("italy_loss_2000-2014_retiled_lzw@1" ==9)*9+("italy_loss_2000-2014_retiled_lzw@1"!=9)*0</textarea>
    </fieldset>

    <div>
      <p>Expression invalid</p>
      <div class="mt-1 flex items-center justify-end gap-[6px]">
        <button type="submit" disabled class="h-[26px] w-[78px] border-2 border-black text-[#808080] shadow-[inset_1px_1px_0_#fff,inset_-1px_-1px_0_#808080] text-shadow-[1px_1px_0_#fff]">OK</button>
        <button type="button" class="h-6 w-[76px] border border-t-white border-l-white border-r-[#404040] border-b-[#404040] shadow-[inset_-1px_-1px_0_#808080]">Cancel</button>
      </div>
    </div>
  </form>
</div>

<script>
// Forest-loss pixels: clusters are [centre x, centre y, spread x, spread y, count, tilt in degrees]
const OX = 349, OY = 107;
const clusters = [
[945,318,4,4,45],[950,326,14,3,35],[923,325,7,8,12],[959,301,7,1,12],[976,334,4,1,10],[1005,381,9,10,95],[1018,390,6,6,12],[935,392,4,1,14],[982,392,4,1,12],[911,402,5,4,40],[904,427,6,8,90,30],[942,430,10,5,50],[961,443,2,2,12],[983,410,9,5,12],[957,395,5,1,8],[974,365,8,6,12],
[1062,251,6,1,14],[1071,237,4,3,10],[1092,266,7,3,20],[1144,297,2,1,7],
[1165,352,7,6,120],[1177,357,7,4,40],[1160,371,17,5,190,22],[1168,381,5,8,40],[1130,383,12,5,70],[1113,390,8,8,70],[1128,410,4,7,85],[1122,400,8,8,30],[1165,395,8,5,25],[1165,335,5,15,35],
[1135,348,55,26,230,-15],[1190,343,22,14,90],[1097,357,17,8,50,-20],[1090,383,12,12,40],[1093,398,12,8,25],[1187,317,22,4,26],[1220,332,7,22,35],[1195,370,25,14,25],[1070,410,8,9,32],[1093,420,6,3,30],[1077,442,9,3,18],[1032,450,5,4,16],[1043,457,7,5,26],[1053,420,8,4,10],[1048,440,10,8,20],[1072,320,10,10,12],[1130,475,30,6,24],[1178,478,12,5,35],[1203,460,6,6,12],
[1213,113,20,6,26],[1177,147,9,4,14],[1150,151,7,3,8],[1128,190,8,6,14],[1130,180,35,20,14],[1210,165,18,25,12],
[1131,495,7,5,110],[1110,489,9,6,55],[1122,483,5,3,45],[1136,487,10,7,35],[1082,502,4,4,45],[1069,504,8,5,20],[1113,505,24,8,90],[1106,519,14,4,40,20],[1177,480,13,9,55],[1148,480,10,5,16],[1170,520,26,16,110],[1213,522,25,24,130],[1193,563,30,20,45],[1218,575,8,6,30],[1204,579,3,1,12],[1174,577,9,1,12],
[1076,545,6,3,38,35],[1088,541,4,2,8],[1097,558,5,2,12],[1113,557,8,3,22,30],[1107,548,5,2,10],[1098,575,3,3,18],[1100,586,2,4,10],[1007,561,10,7,85,-35],[1015,552,3,4,20],[1048,563,4,1,14],[1054,568,8,5,20],[1060,595,7,3,22],[1060,585,6,5,10],[1017,590,5,4,10],[997,583,9,5,18,30],[1117,605,3,3,15],[1078,618,3,2,15],[1085,612,16,13,28],[1146,608,6,5,20],[1153,603,16,6,26],[1195,598,8,1,18],[1199,610,4,8,10],[1147,633,14,4,24],[1178,645,4,9,20,-20],[1113,661,9,1,20],[1132,672,4,4,12],[1120,645,20,15,10],
[955,597,6,6,62],[953,614,12,9,38],[911,610,7,5,32],[923,620,4,3,22],[937,626,12,4,20],[908,595,6,9,12],[964,607,4,8,15],[975,605,22,8,15],[965,651,4,2,30],[971,650,8,9,24],[960,667,6,5,40],[953,683,9,6,35],
[990,688,8,5,90],[1009,681,4,3,22],[1000,697,9,6,65],[1002,685,12,8,35],[1025,700,14,6,25],[978,706,5,3,38],[980,725,5,2,36],[987,738,3,3,15],[974,739,7,3,12],[1013,743,14,3,32],[1024,751,5,3,26,-20],[1037,738,4,1,18],[1003,728,12,9,18],[992,760,13,3,80],[989,768,3,2,26],[1003,764,2,5,16],[1017,762,15,4,35],[1043,759,4,5,22],[1057,753,5,2,16],[1050,705,20,8,12],[1068,763,7,4,12],[990,783,14,9,50],[1000,797,27,12,55],[1022,790,6,2,18],[1017,803,5,3,14],[1073,723,3,4,20],[1093,724,4,4,24,-35],[1085,743,4,4,26],[1102,750,3,1,12],[1125,744,10,4,16],[1056,738,3,4,10],[1080,775,14,9,15],
[1110,765,9,5,75],[1123,768,6,3,45],[1152,761,12,4,38],[1142,773,3,3,15],[1115,783,10,5,105,-35],[1107,797,9,4,75,-35],[1133,781,20,12,75],[1157,789,3,3,14],[1110,807,4,3,22,-20],[1097,817,4,3,36],[1088,799,5,2,14],[1127,813,6,3,20],[1133,829,5,3,30],[1119,830,5,7,28],[1135,843,7,2,38],[1125,835,12,8,25],[1163,833,6,5,62],[1175,825,12,8,26],[1180,818,4,2,18],[1160,800,7,10,12],
[943,815,5,4,42,-35],[952,804,11,2,26],[933,826,4,3,22],[942,826,4,3,18],[922,840,4,3,22,-25],[935,835,3,4,15],[892,825,2,1,8],[1050,830,14,8,38],[1058,832,4,5,18],[1023,842,4,5,22,35],[1075,825,10,9,18],[942,767,7,3,16],[975,803,4,7,16],[968,818,8,3,8],[990,845,12,3,8],
[475,163,28,9,22],[492,160,9,9,26],[488,182,14,9,40],[458,192,10,6,14],[397,175,10,14,12],[385,140,25,20,8],[550,109,7,2,10],[568,154,14,7,14],[630,125,18,9,16],[640,165,16,10,12],[620,192,18,8,14],[745,186,9,6,16],[778,168,9,6,16],[812,190,16,8,30],[790,185,30,14,16],[850,120,12,4,22],[890,122,16,7,24],[898,145,14,8,18],[862,180,20,8,16],[410,195,25,7,12],[515,190,15,8,12],[910,110,18,3,12],[690,112,30,5,8]
];
const strays = [
[900,108,330,90,50],[900,190,330,110,34],[900,300,150,190,36],[1060,300,165,180,30],[900,480,170,110,20],[1060,480,168,150,70],[900,600,180,100,40],[1060,620,168,60,25],[930,710,230,135,90],[1160,690,68,155,12],[355,108,545,98,34]
];
let seed = 20141;
const rnd = () => { seed = (seed * 1664525 + 1013904223) >>> 0; return seed / 4294967296; };
const g = document.getElementById('map').getContext('2d');
const dot = (x, y, w, c) => { g.fillStyle = c; g.fillRect(Math.round(x - OX), Math.round(y - OY), w, 1); };
for (const [cx, cy, rx, ry, n, tilt = 0] of clusters) {
  const a = tilt * Math.PI / 180, dense = n / (rx * ry) > 1;
  for (let i = 0; i < n; i++) {
    const u = (rnd() + rnd() - 1) * rx * 1.3, v = (rnd() + rnd() - 1) * (ry + 0.5) * 1.3;
    dot(cx + u * Math.cos(a) - v * Math.sin(a), cy + u * Math.sin(a) + v * Math.cos(a), dense && rnd() < 0.6 || rnd() < 0.25 ? 2 : 1, dense ? '#ee0410' : '#cf1830');
  }
}
for (const [x, y, w, h, n] of strays) for (let i = 0; i < n; i++) dot(x + rnd() * w, y + rnd() * h, 1, '#b83048');
</script>
</body>
</html>
